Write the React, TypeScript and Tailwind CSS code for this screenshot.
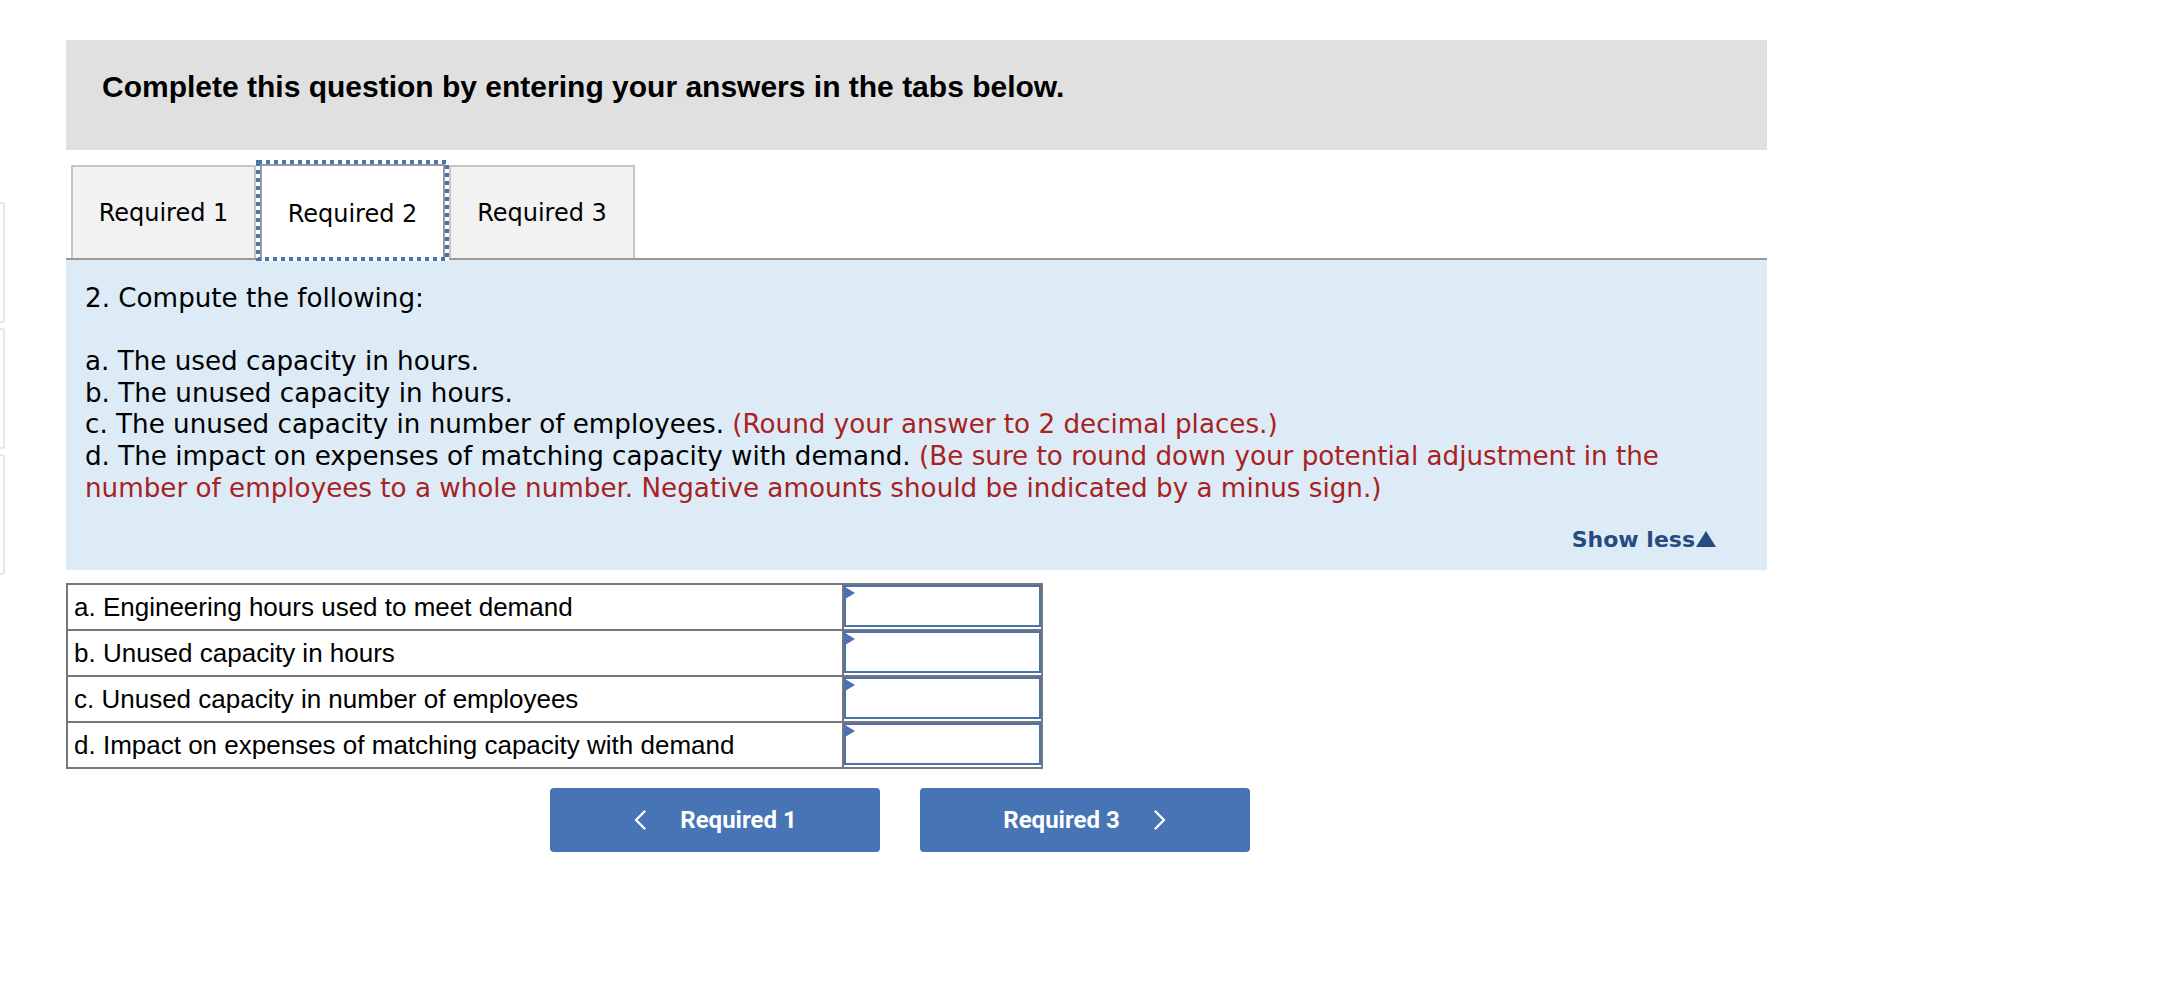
import React from "react";

const verdana = "font-['DejaVu_Sans',Verdana,sans-serif]";
const arial = "font-['Liberation_Sans',Arial,sans-serif]";

function InputCell() {
  return (
    <div className="w-[199px] border-l-2 border-[#777] pb-[2px]">
      <div className="relative h-[42px] w-[197px] border-2 border-[#4a72b0] bg-white">
        <svg
          className="absolute -left-[1px] top-0"
          width="10"
          height="12"
          viewBox="0 0 10 12"
        >
          <polygon points="0,0 10,6 0,12" fill="#4a72b0" />
        </svg>
      </div>
    </div>
  );
}

function Row({ label, first }: { label: string; first?: boolean }) {
  return (
    <div className={`flex ${first ? "h-[44px]" : "h-[46px] border-t-2 border-[#777]"}`}>
      <div
        className={`flex-1 flex items-center pl-[6px] text-[26px] text-black ${arial}`}
      >
        {label}
      </div>
      <InputCell />
    </div>
  );
}

export default function App() {
  return (
    <div className="relative flex h-[998px] w-[2160px] overflow-hidden bg-white">
      {/* left rail (cut off) */}
      <div className="flex w-[5px] shrink-0 flex-col gap-[5px] pt-[202px]">
        <div className="h-[121px] w-[5px] rounded-r-[3px] border-y-2 border-r-2 border-[#e6e6e6]" />
        <div className="h-[121px] w-[5px] rounded-r-[3px] border-y-2 border-r-2 border-[#e6e6e6]" />
        <div className="h-[121px] w-[5px] rounded-r-[3px] border-y-2 border-r-2 border-[#e6e6e6]" />
      </div>

      <div className="ml-[61px] w-[1701px] shrink-0 pt-[40px]">
        {/* header */}
        <div
          className={`h-[110px] bg-[#e0e0e0] pl-[36px] pt-[30px] text-[30px] font-bold leading-[34px] text-black ${arial}`}
        >
          Complete this question by entering your answers in the tabs below.
        </div>

        {/* tabs */}
        <div className="mt-[10px] flex h-[100px] items-end border-b-2 border-[#999] pl-[5px]">
          <div
            className={`flex h-[93px] w-[185px] items-center justify-center border-2 border-b-0 border-[#c6c6c6] bg-[#f2f2f2] text-[24px] text-black ${verdana}`}
          >
            Required 1
          </div>
          <div className="relative z-10 -mb-[3px] flex h-[101px] w-[193px] flex-col bg-white px-[4px] pt-[4px]">
            <div
              className={`flex flex-1 items-center justify-center border-2 border-b-0 border-[#999] bg-white text-[24px] text-black ${verdana}`}
            >
              Required 2
            </div>
            <svg
              className="pointer-events-none absolute left-0 top-0"
              width="193"
              height="101"
              viewBox="0 0 193 101"
              fill="none"
            >
              <rect
                x="2"
                y="2"
                width="189"
                height="97"
                stroke="#4a73b3"
                strokeWidth="4"
                strokeDasharray="4 4"
              />
            </svg>
          </div>
          <div
            className={`flex h-[93px] w-[186px] items-center justify-center border-2 border-b-0 border-[#c6c6c6] bg-[#f2f2f2] text-[24px] text-black ${verdana}`}
          >
            Required 3
          </div>
        </div>

        {/* instructions panel */}
        <div className={`bg-[#ddebf7] pb-[17px] pl-[19px] pr-[51px] pt-[23px] ${verdana}`}>
          <div className="text-[26.2px] leading-[31.6px] text-black">
            <p>2. Compute the following:</p>
            <p className="mt-[31.6px] whitespace-nowrap">
              a. The used capacity in hours.
              <br />
              b. The unused capacity in hours.
              <br />
              c. The unused capacity in number of employees.{" "}
              <span className="text-[#a82222]">(Round your answer to 2 decimal places.)</span>
              <br />
              d. The impact on expenses of matching capacity with demand.{" "}
              <span className="text-[#a82222]">
                (Be sure to round down your potential adjustment in the
                <br />
                number of employees to a whole number. Negative amounts should be indicated by a
                minus sign.)
              </span>
            </p>
          </div>
          <div className="mt-[23px] flex h-[26px] items-center justify-end text-[22px] font-bold leading-[26px] text-[#264a82]">
            <span>Show less</span>
            <svg width="20" height="16" viewBox="0 0 20 16" className="ml-[1px] mt-[-3px]">
              <polygon points="10,0 20,16 0,16" fill="#264a82" />
            </svg>
          </div>
        </div>

        {/* answer table */}
        <div className="mt-[13px] w-[977px] border-2 border-[#777]">
          <Row first label="a. Engineering hours used to meet demand" />
          <Row label="b. Unused capacity in hours" />
          <Row label="c. Unused capacity in number of employees" />
          <Row label="d. Impact on expenses of matching capacity with demand" />
        </div>

        {/* nav buttons */}
        <div className="mt-[19px] flex gap-[40px] pl-[484px] font-[Roboto,sans-serif]">
          <button className="flex h-[64px] w-[330px] items-center justify-center gap-[33px] rounded-[4px] bg-[#4774b4] text-[24px] font-bold text-white">
            <svg width="14" height="20" viewBox="0 0 14 20" fill="none">
              <polyline
                points="11.5,1.5 3,10 11.5,18.5"
                stroke="white"
                strokeWidth="2.4"
                strokeLinecap="round"
                strokeLinejoin="round"
              />
            </svg>
            <span>Required 1</span>
          </button>
          <button className="flex h-[64px] w-[330px] items-center justify-center gap-[33px] rounded-[4px] bg-[#4774b4] text-[24px] font-bold text-white">
            <span>Required 3</span>
            <svg width="14" height="20" viewBox="0 0 14 20" fill="none">
              <polyline
                points="2.5,1.5 11,10 2.5,18.5"
                stroke="white"
                strokeWidth="2.4"
                strokeLinecap="round"
                strokeLinejoin="round"
              />
            </svg>
          </button>
        </div>
      </div>
    </div>
  );
}
